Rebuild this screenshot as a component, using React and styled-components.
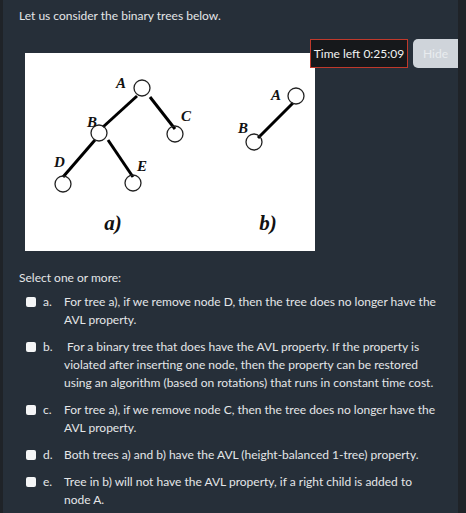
import styled, { createGlobalStyle } from "styled-components";

const Global = createGlobalStyle`
  html, body {
    margin: 0;
    padding: 0;
    background: #1f2328;
  }
  body {
    font-family: Lato, "Open Sans", sans-serif;
    color: #e4e6e8;
  }
`;

const Page = styled.div`
  width: 466px;
  height: 513px;
  overflow: hidden;
  display: flex;
`;

const Panel = styled.div`
  position: relative;
  margin-left: 3px;
  width: 455px;
  background: #262f39;
  padding: 7px 0 0 16px;
  box-sizing: border-box;
`;

const Prompt = styled.div`
  font-size: 12px;
  line-height: 18px;
`;

const Figure = styled.div`
  margin: 28px 0 0 6px;
  width: 290px;
  height: 198px;
  background: #ffffff;
  svg {
    display: block;
  }
`;

const Timer = styled.div`
  position: absolute;
  top: 39px;
  left: 307px;
  width: 98px;
  height: 29px;
  box-sizing: border-box;
  border: 1px solid #c0392b;
  background: #16181b;
  color: #f2f2f2;
  font-size: 12px;
  display: flex;
  align-items: center;
  justify-content: center;
`;

const HideButton = styled.button`
  position: absolute;
  top: 39px;
  left: 410px;
  width: 45px;
  height: 29px;
  border: none;
  border-radius: 5px 0 0 5px;
  background: #cfd4da;
  color: #e9ecef;
  font-family: inherit;
  font-size: 12px;
  padding: 0;
`;

const Instruction = styled.div`
  margin-top: 18px;
  font-size: 12px;
  line-height: 18px;
`;

const Options = styled.div`
  margin-top: 6px;
  padding-left: 7px;
  display: flex;
  flex-direction: column;
  gap: 9px;
`;

const Option = styled.label`
  display: flex;
  align-items: flex-start;
  font-size: 12px;
  line-height: 18px;
`;

const Box = styled.span`
  flex: none;
  width: 10px;
  height: 10px;
  margin-top: 4px;
  border-radius: 2px;
  background: #f4f5f6;
`;

const Letter = styled.span`
  flex: none;
  width: 21px;
  margin-left: 7px;
`;

const Text = styled.span`
  width: 376px;
`;

const Label = styled.text`
  font-family: "Liberation Serif", serif;
  font-style: italic;
  font-weight: bold;
  font-size: 15px;
  fill: #111;
`;

const Caption = styled(Label)`
  font-size: 21px;
`;

const Tree = () => (
  <svg width="290" height="198" viewBox="25 53 290 198">
    <g stroke="#000" strokeWidth="3" strokeLinecap="butt">
      <line x1="137" y1="96" x2="103" y2="127" />
      <line x1="150" y1="97" x2="175" y2="129" />
      <line x1="95" y1="140" x2="63" y2="177" />
      <line x1="108" y1="140" x2="133" y2="177" />
      <line x1="293" y1="103" x2="258" y2="138" />
    </g>
    <g fill="none" stroke="#222" strokeWidth="1.3">
      <circle cx="142" cy="88" r="8" />
      <circle cx="99" cy="133" r="8" />
      <circle cx="175" cy="134" r="8" />
      <circle cx="63" cy="184" r="8" />
      <circle cx="133" cy="183" r="8" />
      <circle cx="296" cy="96" r="8" />
      <circle cx="254" cy="142" r="8" />
    </g>
    <Label x="116" y="88">A</Label>
    <Label x="87" y="127">B</Label>
    <Label x="181" y="121">C</Label>
    <Label x="54" y="167">D</Label>
    <Label x="137" y="171">E</Label>
    <Label x="271" y="100">A</Label>
    <Label x="238" y="133">B</Label>
    <Caption x="113" y="230" textAnchor="middle">a)</Caption>
    <Caption x="268" y="230" textAnchor="middle">b)</Caption>
  </svg>
);

const options = [
  ["a.", "For tree a), if we remove node D, then the tree does no longer have the AVL property."],
  ["b.", "\u00a0For a binary tree that does have the AVL property. If the property is violated after inserting one node, then the property can be restored using an algorithm (based on rotations) that runs in constant time cost."],
  ["c.", "For tree a), if we remove node C, then the tree does no longer have the AVL property."],
  ["d.", "Both trees a) and b) have the AVL (height-balanced 1-tree) property."],
  ["e.", "Tree in b) will not have the AVL property, if a right child is added to node A."],
];

const App = () => (
  <Page>
    <Global />
    <Panel>
      <Prompt>Let us consider the binary trees below.</Prompt>
      <Figure>
        <Tree />
      </Figure>
      <Timer>Time left 0:25:09</Timer>
      <HideButton>Hide</HideButton>
      <Instruction>Select one or more:</Instruction>
      <Options>
        {options.map(([letter, text]) => (
          <Option key={letter}>
            <Box />
            <Letter>{letter}</Letter>
            <Text>{text}</Text>
          </Option>
        ))}
      </Options>
    </Panel>
  </Page>
);

export default App;
